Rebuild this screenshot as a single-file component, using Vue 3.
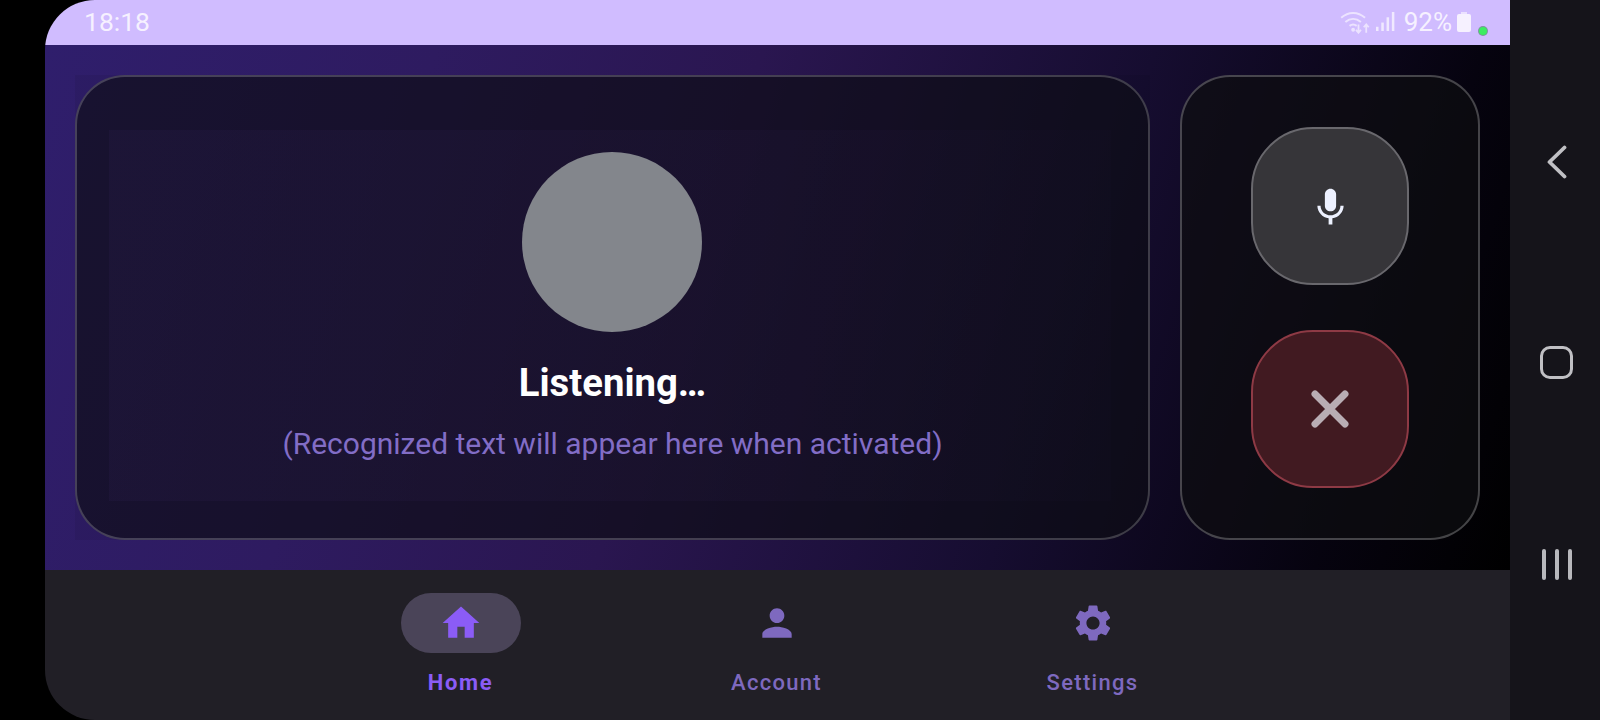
<template>
  <div class="screen">
    <div class="app">
      <!-- Status bar -->
      <div class="status-bar">
        <span class="clock">18:18</span>
        <div class="status-icons">
          <svg class="wifi" viewBox="0 0 26 20" width="31" height="24" fill="none" stroke="currentColor">
            <path d="M1 6.5C7 1 15 1 21 6.5" stroke-width="1.7"/>
            <path d="M4.5 10c4-3.4 9-3.4 13 0" stroke-width="1.7"/>
            <path d="M8 13.2c2-1.5 4-1.5 6 0" stroke-width="1.7"/>
            <circle cx="11" cy="16.5" r="1.6" fill="currentColor" stroke="none"/>
            <path d="M15.5 12v7M13.4 16.6l2.1 2.4 2.1-2.4" stroke-width="1.5"/>
            <path d="M22 19v-7M19.9 14.4l2.1-2.4 2.1 2.4" stroke-width="1.5"/>
          </svg>
          <svg class="signal" viewBox="0 0 18 18" width="19" height="19" fill="currentColor">
            <rect x="0" y="14" width="2.4" height="4"/>
            <rect x="5" y="10" width="2.4" height="8"/>
            <rect x="10" y="5" width="2.4" height="13"/>
            <rect x="15" y="0" width="2.4" height="18"/>
          </svg>
          <span class="battery-text">92%</span>
          <svg class="battery" viewBox="0 0 14 20" width="14" height="20" fill="currentColor">
            <path d="M4 0h6v2H4z" opacity="0.7"/>
            <rect x="0" y="2" width="14" height="18" rx="2"/>
          </svg>
          <span class="green-dot"></span>
        </div>
      </div>

      <!-- Main content -->
      <div class="main">
        <div class="voice-wrap">
          <div class="voice-card">
            <div class="voice-orb"></div>
            <div class="voice-title">Listening…</div>
            <div class="voice-sub">(Recognized text will appear here when activated)</div>
          </div>
        </div>
        <div class="controls-card">
          <button class="ctl-btn mic">
            <svg viewBox="0 0 24 24" width="45" height="45" fill="currentColor">
              <path d="M12 14c1.66 0 2.99-1.34 2.99-3L15 5c0-1.66-1.34-3-3-3S9 3.34 9 5v6c0 1.66 1.34 3 3 3zm5.3-3c0 3-2.54 5.1-5.3 5.1S6.7 14 6.7 11H5c0 3.41 2.72 6.23 6 6.72V21h2v-3.28c3.28-.48 6-3.3 6-6.72h-1.7z"/>
            </svg>
          </button>
          <button class="ctl-btn close">
            <svg viewBox="0 0 38 38" width="38" height="38" fill="none" stroke="currentColor" stroke-width="7" stroke-linecap="round">
              <path d="M4 4l30 30M34 4L4 34"/>
            </svg>
          </button>
        </div>
      </div>

      <!-- Bottom navigation -->
      <nav class="bottom-nav">
        <div v-for="item in navItems" :key="item.label" class="nav-item" :class="{ active: item.active }">
          <div class="nav-icon">
            <svg viewBox="0 0 24 24" width="44" height="44" fill="currentColor">
              <path :d="item.icon"/>
            </svg>
          </div>
          <span class="nav-label">{{ item.label }}</span>
        </div>
      </nav>
    </div>

    <!-- Android navigation bar -->
    <div class="system-nav">
      <svg viewBox="0 0 22 34" width="22" height="34" fill="none" stroke="currentColor" stroke-width="3.8" stroke-linecap="round" stroke-linejoin="round">
        <path d="M18.5 2.5L3.5 17l15 14.5"/>
      </svg>
      <div class="sys-home"></div>
      <div class="sys-recents"><span></span><span></span><span></span></div>
    </div>
  </div>
</template>

<script setup>
const navItems = [
  {
    label: 'Home',
    active: true,
    icon: 'M10 20v-6h4v6h5v-8h3L12 3 2 12h3v8z',
  },
  {
    label: 'Account',
    active: false,
    icon: 'M12 12c2.21 0 4-1.79 4-4s-1.79-4-4-4-4 1.79-4 4 1.79 4 4 4zm0 2c-2.67 0-8 1.34-8 4v2h16v-2c0-2.66-5.33-4-8-4z',
  },
  {
    label: 'Settings',
    active: false,
    icon: 'M19.14 12.94c.04-.3.06-.61.06-.94 0-.32-.02-.64-.07-.94l2.03-1.58c.18-.14.23-.41.12-.61l-1.92-3.32c-.12-.22-.37-.29-.59-.22l-2.39.96c-.5-.38-1.03-.7-1.62-.94l-.36-2.54c-.04-.24-.24-.41-.48-.41h-3.84c-.24 0-.43.17-.47.41l-.36 2.54c-.59.24-1.13.57-1.62.94l-2.39-.96c-.22-.08-.47 0-.59.22L2.74 8.87c-.12.21-.08.47.12.61l2.03 1.58c-.05.3-.09.63-.09.94s.02.64.07.94l-2.03 1.58c-.18.14-.23.41-.12.61l1.92 3.32c.12.22.37.29.59.22l2.39-.96c.5.38 1.03.7 1.62.94l.36 2.54c.05.24.24.41.48.41h3.84c.24 0 .44-.17.47-.41l.36-2.54c.59-.24 1.13-.56 1.62-.94l2.39.96c.22.08.47 0 .59-.22l1.92-3.32c.12-.22.07-.47-.12-.61l-2.01-1.58zM12 15.6c-1.98 0-3.6-1.62-3.6-3.6s1.62-3.6 3.6-3.6 3.6 1.62 3.6 3.6-1.62 3.6-3.6 3.6z',
  },
]
</script>

<style>
html, body {
  background: #000;
  overflow: hidden;
}
</style>

<style scoped>
.screen {
  width: 1600px;
  height: 720px;
  display: flex;
  padding-left: 45px;
  box-sizing: border-box;
  background: #000;
  font-family: Roboto, "Liberation Sans", sans-serif;
}

.app {
  flex: 1;
  display: flex;
  flex-direction: column;
  border-radius: 50px 0 0 50px;
  overflow: hidden;
}

/* Status bar */
.status-bar {
  height: 45px;
  flex-shrink: 0;
  display: flex;
  align-items: center;
  justify-content: space-between;
  padding: 0 23px 2px 39px;
  box-sizing: border-box;
  background: #d0bcff;
  color: #f6f1ff;
}

.clock {
  font-size: 26.5px;
  font-weight: 400;
}

.status-icons {
  display: flex;
  align-items: center;
}

.wifi {
  margin-right: 5px;
  opacity: 0.75;
}

.signal {
  margin-right: 9px;
  opacity: 0.85;
}

.battery-text {
  font-size: 26px;
  font-weight: 400;
  margin-right: 5px;
}

.green-dot {
  width: 8px;
  height: 8px;
  border-radius: 50%;
  background: #3cec62;
  margin: 18px 0 0 8px;
  box-shadow: 0 0 0 1px rgba(40, 110, 60, 0.5);
}

/* Main area */
.main {
  flex: 1;
  display: flex;
  gap: 30px;
  padding: 30px;
  background: linear-gradient(108deg, #2f1e6c 0%, #2e1b60 24%, #2a1650 44%, #160d30 68%, #06030f 88%, #000 100%);
}

.voice-wrap {
  flex: 1;
  display: flex;
  background: rgba(0, 0, 0, 0.06);
}

.voice-card {
  position: relative;
  flex: 1;
  display: flex;
  flex-direction: column;
  align-items: center;
  padding-top: 75px;
  border: 2px solid rgba(255, 255, 255, 0.2);
  border-radius: 50px;
  background: rgba(14, 14, 22, 0.66);
  box-sizing: border-box;
}

/* faint banded glow behind the text, fading out to the right */
.voice-card::before {
  content: '';
  position: absolute;
  top: 53px;
  bottom: 37px;
  left: 32px;
  right: 37px;
  background: linear-gradient(90deg, rgba(90, 60, 150, 0.07), rgba(90, 60, 150, 0.05) 60%, rgba(90, 60, 150, 0.015));
  pointer-events: none;
}

.voice-orb {
  position: relative;
  width: 180px;
  height: 180px;
  margin-right: 2px;
  border-radius: 50%;
  background: #83868c;
}

.voice-title {
  position: relative;
  margin-top: 28px;
  font-size: 38.3px;
  line-height: 46px;
  font-weight: 700;
  color: #fff;
}

.voice-sub {
  position: relative;
  margin-top: 18px;
  font-size: 30px;
  line-height: 40px;
  color: #826dc6;
}

.controls-card {
  width: 300px;
  flex-shrink: 0;
  display: flex;
  flex-direction: column;
  align-items: center;
  justify-content: center;
  gap: 45px;
  border: 2px solid rgba(255, 255, 255, 0.24);
  border-radius: 50px;
  background: rgba(14, 14, 16, 0.72);
  box-sizing: border-box;
}

.ctl-btn {
  width: 158px;
  height: 158px;
  padding: 0;
  display: flex;
  align-items: center;
  justify-content: center;
  border-radius: 62px;
  box-sizing: border-box;
}

.ctl-btn.mic {
  background: #363539;
  border: 2px solid #69686d;
  color: #edf1ff;
}

.ctl-btn.mic svg {
  margin-top: 3px;
}

.ctl-btn.close {
  background: #411a21;
  border: 2px solid #8e3a45;
  color: #b9adb4;
}

/* Bottom nav */
.bottom-nav {
  height: 150px;
  flex-shrink: 0;
  display: flex;
  justify-content: center;
  padding-right: 2px;
  background: #211f26;
}

.nav-item {
  width: 316px;
  display: flex;
  flex-direction: column;
  align-items: center;
  padding-top: 23px;
  color: #7e69bf;
}

.nav-item.active {
  color: #8b5cf6;
}

.nav-icon {
  width: 120px;
  height: 60px;
  display: flex;
  align-items: center;
  justify-content: center;
  border-radius: 30px;
}

.nav-item.active .nav-icon {
  background: #4a4458;
}

.nav-label {
  margin-top: 14px;
  font-size: 22px;
  line-height: 32px;
  font-weight: 500;
  letter-spacing: 1.3px;
}

.nav-item.active .nav-label {
  font-weight: 700;
  letter-spacing: 1.6px;
}

/* Android nav bar */
.system-nav {
  width: 90px;
  flex-shrink: 0;
  display: flex;
  flex-direction: column;
  align-items: center;
  padding: 145px 0 140px 3px;
  box-sizing: border-box;
  justify-content: space-between;
  background: #15141a;
  color: #c0c0c4;
}

.sys-home {
  width: 33px;
  height: 33px;
  margin-top: -4px;
  border: 3.8px solid #c0c0c4;
  border-radius: 10px;
  box-sizing: border-box;
}

.sys-recents {
  display: flex;
  gap: 9px;
}

.sys-recents span {
  width: 4px;
  height: 31px;
  border-radius: 2px;
  background: #b8b8bc;
}
</style>
